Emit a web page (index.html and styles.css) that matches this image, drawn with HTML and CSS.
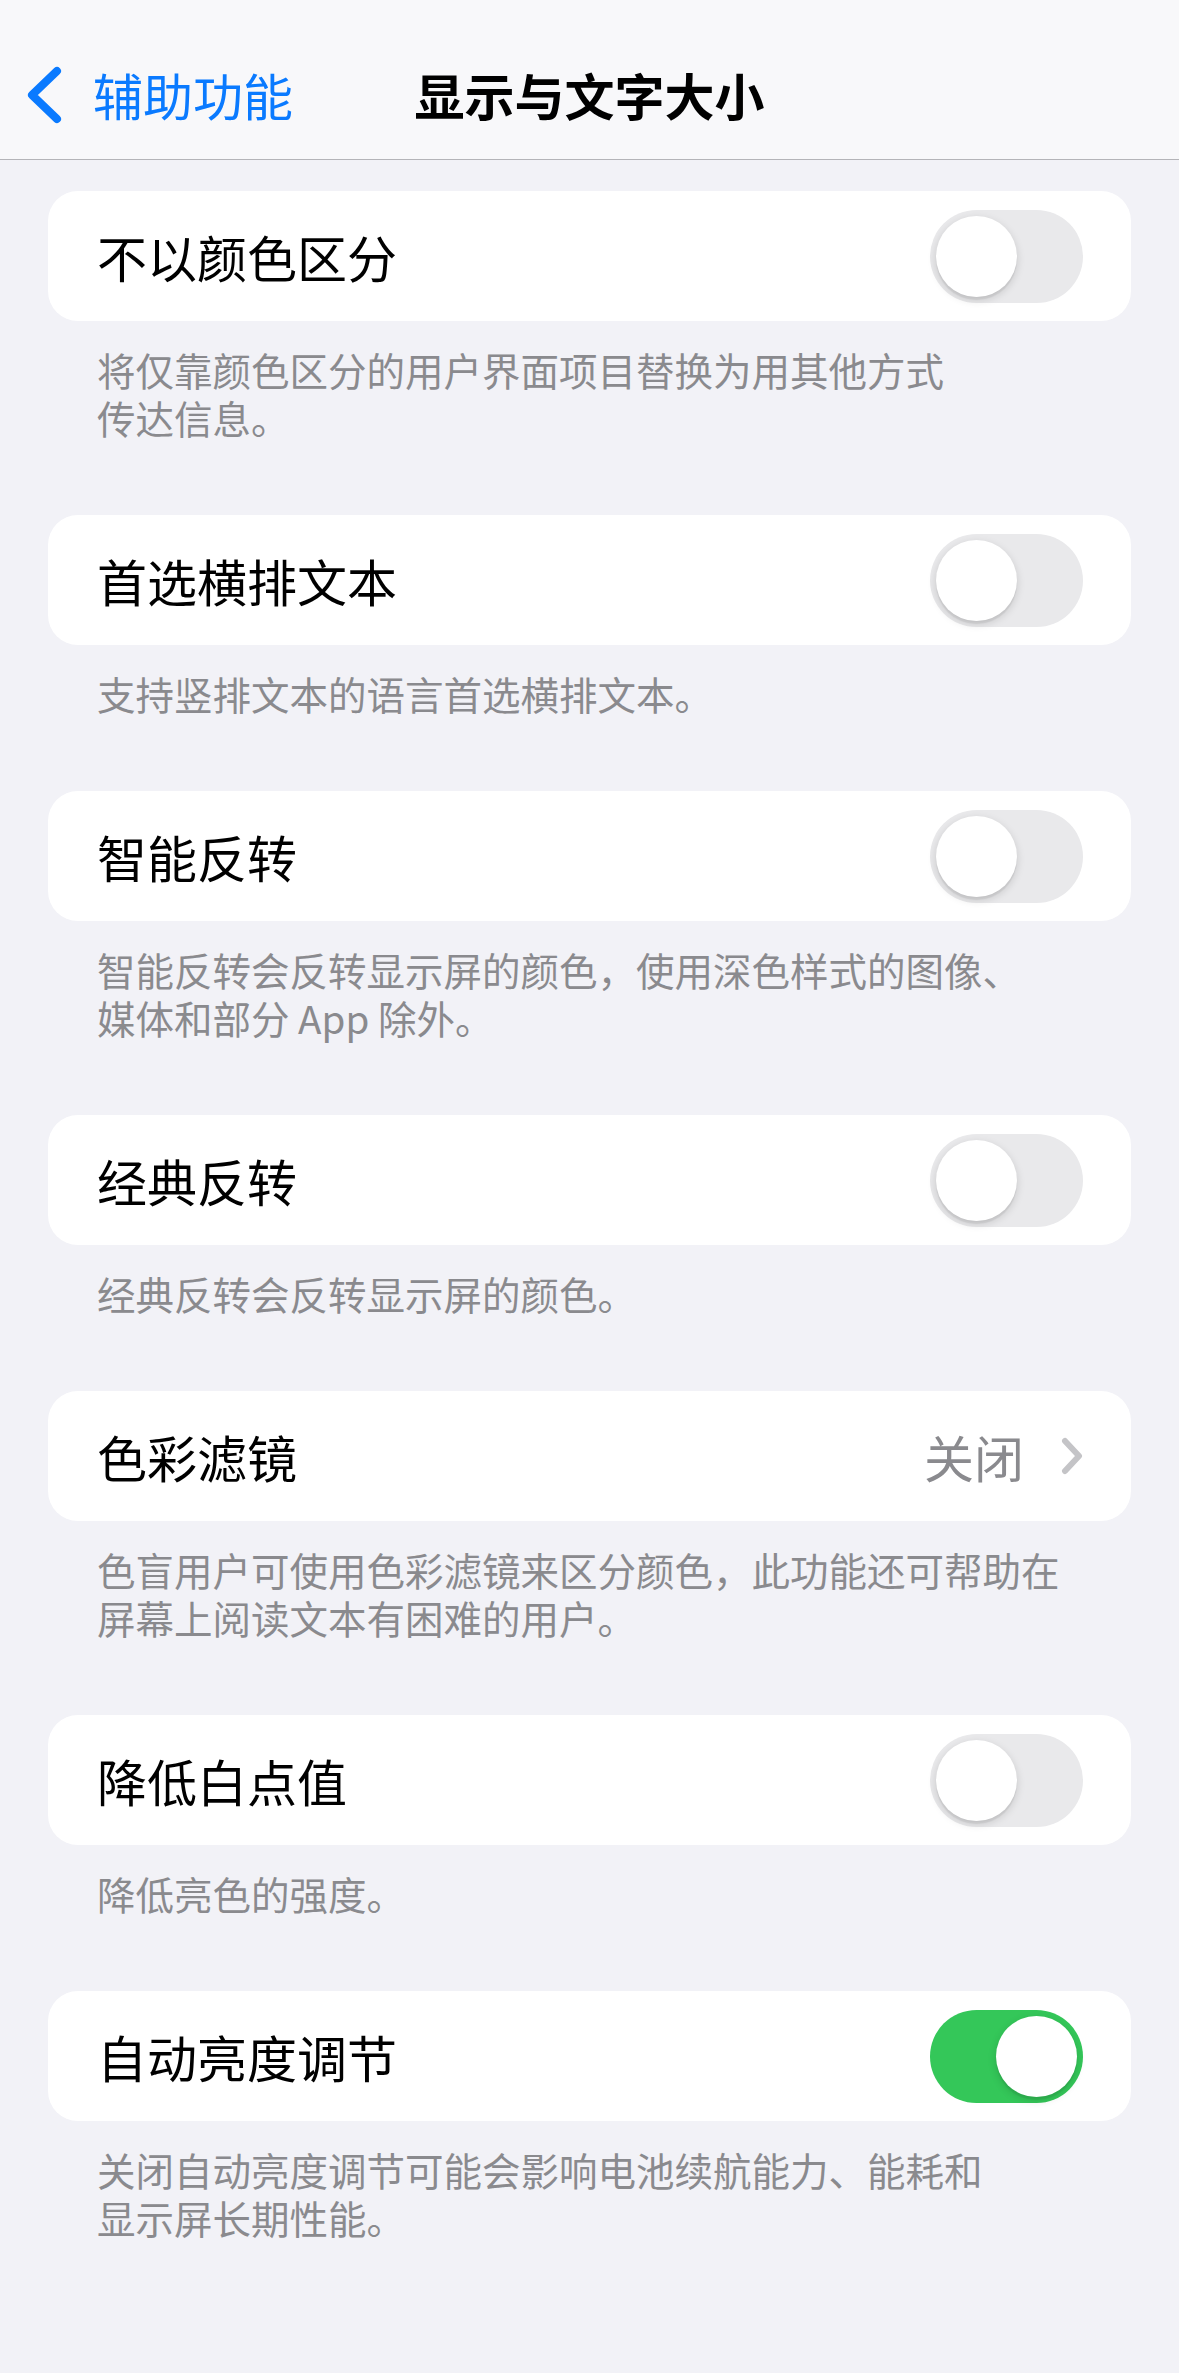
FILE: index.html
```html
<!DOCTYPE html>
<html lang="zh-CN">

<head>
    <meta charset="UTF-8">
    <meta name="viewport" content="width=device-width, initial-scale=1.0">
    <title>显示与文字大小</title>
    <link rel="stylesheet" href="styles.css">
</head>

<body>
    <header class="nav">
        <div class="nav-bar">
            <a class="back" href="#">
                <svg class="back-icon" width="36" height="58" viewBox="0 0 36 58">
                    <polyline points="31,5 6,29 31,53" fill="none" stroke="#0a7aff" stroke-width="8"
                        stroke-linecap="round" stroke-linejoin="round" />
                </svg>
                <span>辅助功能</span>
            </a>
            <h1 class="title">显示与文字大小</h1>
            <div></div>
        </div>
    </header>

    <main class="list">
        <section class="group">
            <div class="card">
                <span class="label">不以颜色区分</span>
                <span class="switch"></span>
            </div>
            <p class="note">将仅靠颜色区分的用户界面项目替换为用其他方式<br>传达信息。</p>
        </section>

        <section class="group">
            <div class="card">
                <span class="label">首选横排文本</span>
                <span class="switch"></span>
            </div>
            <p class="note">支持竖排文本的语言首选横排文本。</p>
        </section>

        <section class="group">
            <div class="card">
                <span class="label">智能反转</span>
                <span class="switch"></span>
            </div>
            <p class="note">智能反转会反转显示屏的颜色，使用深色样式的图像、<br>媒体和部分 App 除外。</p>
        </section>

        <section class="group">
            <div class="card">
                <span class="label">经典反转</span>
                <span class="switch"></span>
            </div>
            <p class="note">经典反转会反转显示屏的颜色。</p>
        </section>

        <section class="group">
            <div class="card card-link">
                <span class="label">色彩滤镜</span>
                <span class="value">关闭</span>
                <svg class="chevron" width="22" height="38" viewBox="0 0 22 38">
                    <polyline points="4,4 18,19 4,34" fill="none" stroke="#c4c4c7" stroke-width="6"
                        stroke-linecap="round" stroke-linejoin="round" />
                </svg>
            </div>
            <p class="note">色盲用户可使用色彩滤镜来区分颜色，此功能还可帮助在<br>屏幕上阅读文本有困难的用户。</p>
        </section>

        <section class="group">
            <div class="card">
                <span class="label">降低白点值</span>
                <span class="switch"></span>
            </div>
            <p class="note">降低亮色的强度。</p>
        </section>

        <section class="group">
            <div class="card">
                <span class="label">自动亮度调节</span>
                <span class="switch on"></span>
            </div>
            <p class="note">关闭自动亮度调节可能会影响电池续航能力、能耗和<br>显示屏长期性能。</p>
        </section>
    </main>
</body>

</html>
```

FILE: styles.css
```css
body {
    font-family: "Noto Sans CJK SC", "Noto Sans", sans-serif;
    background-color: #f2f2f7;
    color: #000;
    margin: 0;
    padding: 0;
    min-height: 100vh;
}

.nav {
    background-color: #f8f8fa;
    border-bottom: 1px solid #b4b4b8;
    height: 160px;
    padding-top: 28px;
    box-sizing: border-box;
}

.nav-bar {
    display: grid;
    grid-template-columns: 1fr auto 1fr;
    align-items: center;
    height: 132px;
}

.back {
    display: flex;
    align-items: center;
    color: #0a7aff;
    text-decoration: none;
    font-size: 50px;
    line-height: 1.2;
    padding-left: 26px;
    gap: 31px;
}

.back-icon {
    display: block;
    margin-top: 2px;
}

.title {
    margin: 0;
    font-size: 50px;
    line-height: 1.2;
    font-weight: 600;
}

.list {
    padding: 31px 48px 0;
}

.group {
    margin-bottom: 74px;
}

.card {
    background-color: #fff;
    border-radius: 30px;
    height: 130px;
    display: flex;
    align-items: center;
    padding: 0 48px 0 49px;
}

.label {
    flex: 1;
    font-size: 50px;
    line-height: 1.2;
}

.value {
    font-size: 50px;
    line-height: 1.2;
    color: #8a8a8e;
}

.card-link {
    padding-right: 48px;
}

.chevron {
    display: block;
    margin-left: 37px;
}

.switch {
    position: relative;
    width: 153px;
    height: 93px;
    border-radius: 47px;
    background-color: #e9e9eb;
}

.switch::after {
    content: "";
    position: absolute;
    top: 6px;
    left: 6px;
    width: 81px;
    height: 81px;
    border-radius: 50%;
    background-color: #fff;
    box-shadow: 0 3px 8px rgba(0, 0, 0, 0.15), 0 3px 1px rgba(0, 0, 0, 0.06);
}

.switch.on {
    background-color: #34c759;
}

.switch.on::after {
    left: 66px;
}

.note {
    margin: 24px 0 0;
    padding-left: 49px;
    font-size: 38.5px;
    line-height: 48px;
    color: #8a8a8e;
}
```
